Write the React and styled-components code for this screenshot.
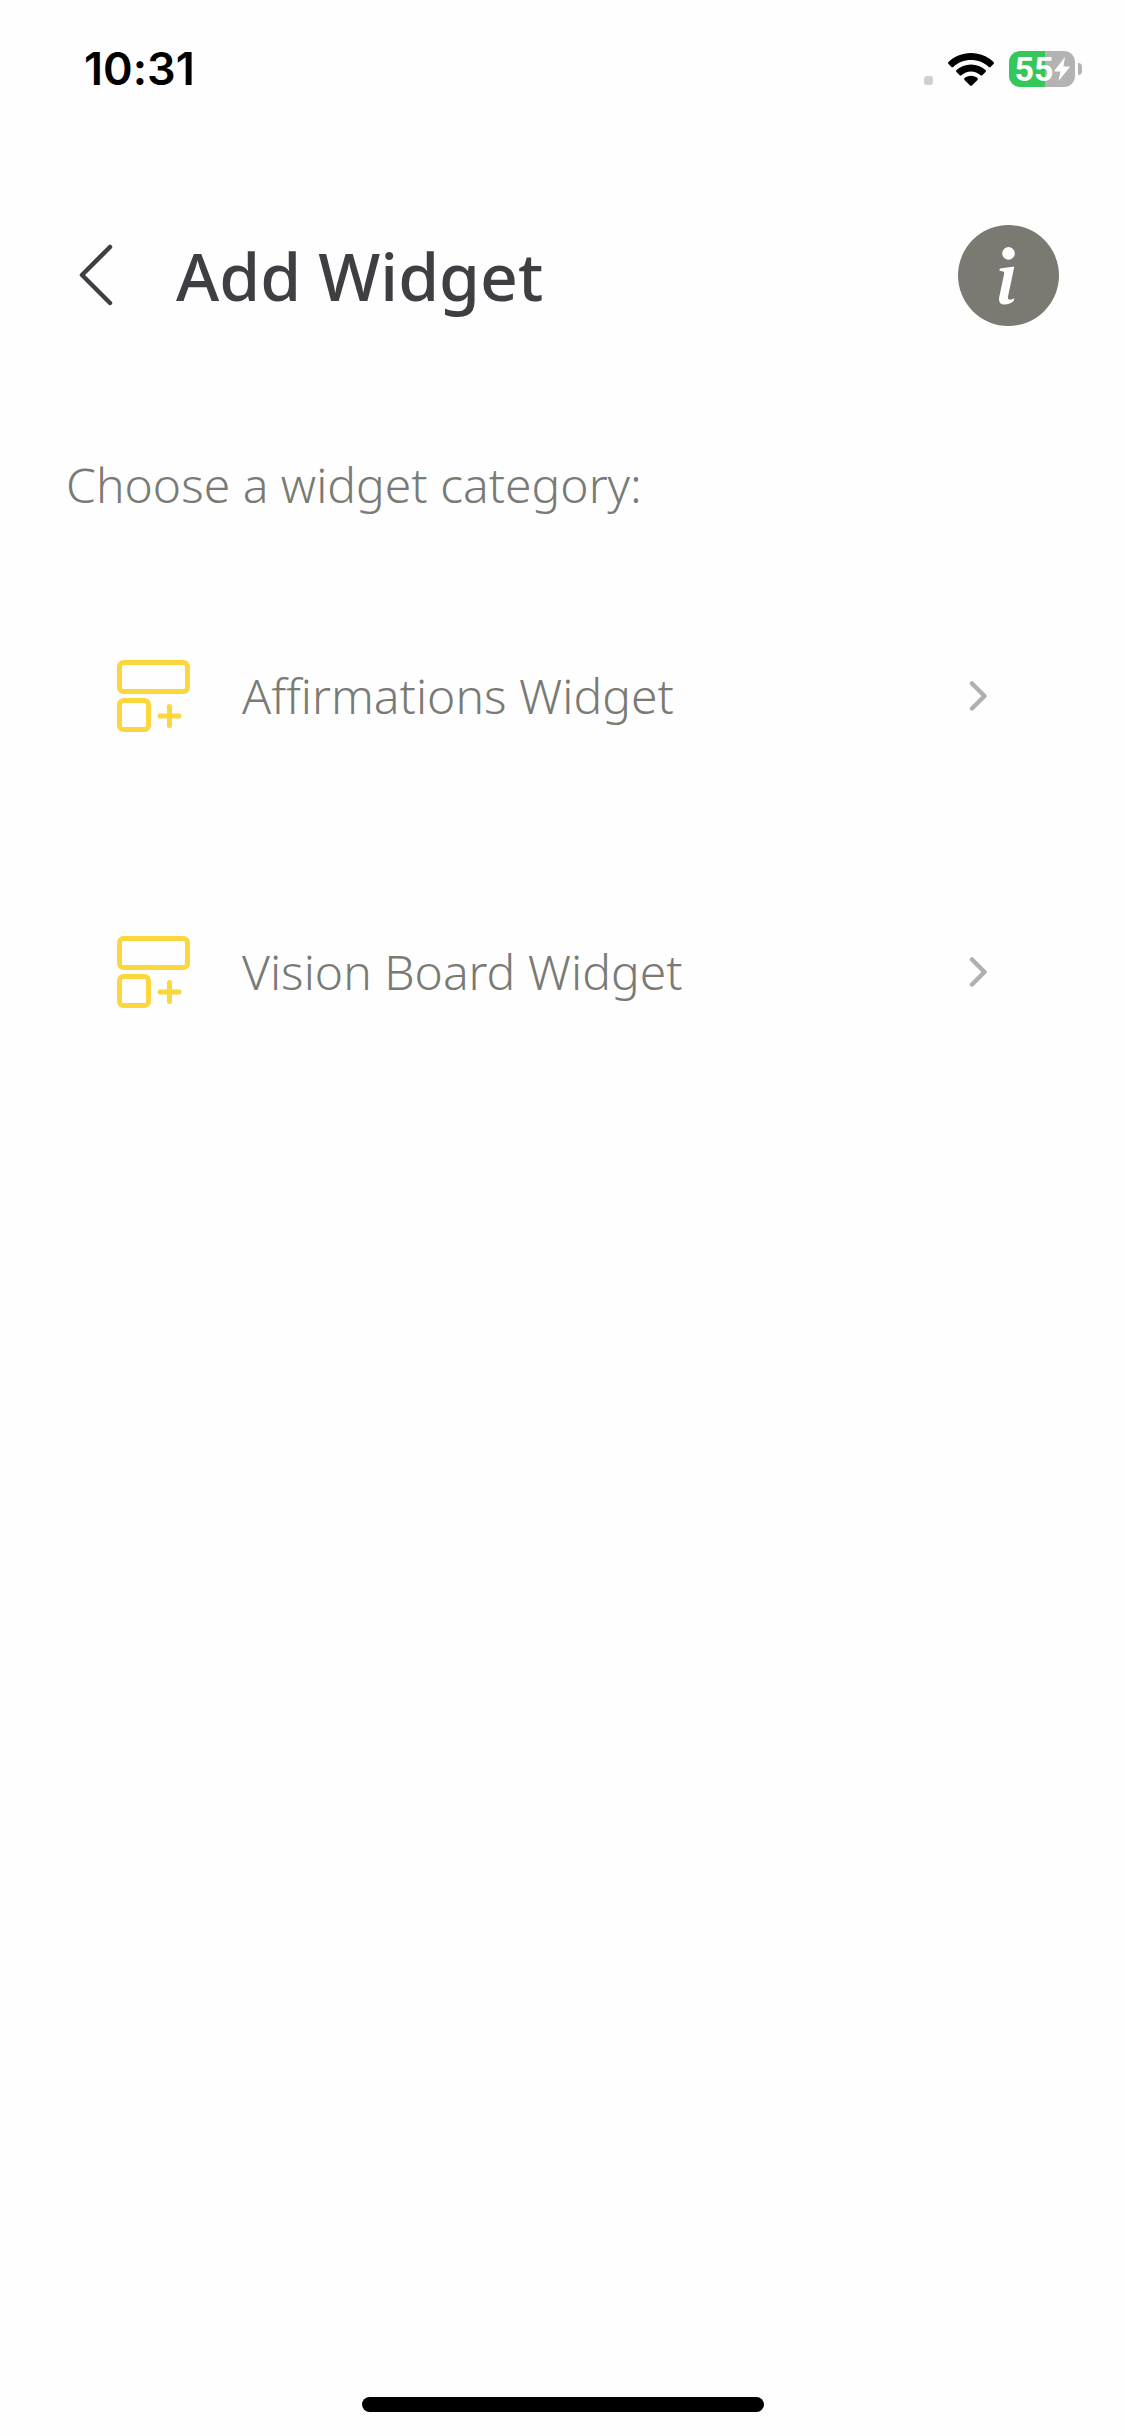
import React from "react";
import styled, { createGlobalStyle } from "styled-components";
import { BsInfoCircleFill } from "react-icons/bs";

const GlobalStyle = createGlobalStyle`
  * {
    box-sizing: border-box;
  }
  body {
    margin: 0;
    background: #fefefe;
    font-family: "Noto Sans", "Open Sans", sans-serif;
    font-variant-ligatures: none;
  }
`;

const Screen = styled.div`
  min-height: 100vh;
  display: flex;
  flex-direction: column;
`;
const StatusBar = styled.div`
  display: flex;
  align-items: center;
  justify-content: space-between;
  height: 138px;
  padding: 0 43px 0 84px;
`;
const Time = styled.time`
  font-family: Inter, sans-serif;
  font-size: 45px;
  font-weight: 600;
  line-height: 54px;
  color: #000000;
`;
const StatusIcons = styled.div`
  display: flex;
  align-items: center;
`;
const SignalDot = styled.span`
  width: 9px;
  height: 9px;
  align-self: flex-end;
  margin: 0 15px 2px 0;
  border-radius: 3px;
  background: #cfcfcf;
`;
const Wifi = styled.svg`
  width: 46px;
  height: 33px;
  margin-right: 15px;
`;
const Battery = styled.div`
  display: flex;
  align-items: center;
  justify-content: center;
  width: 66px;
  height: 36px;
  border-radius: 11px;
  background: linear-gradient(
    to right,
    #34c759 ${({ level }) => level}%,
    #b3b3b3 ${({ level }) => level}%
  );
  font-family: Roboto, sans-serif;
  font-size: 34px;
  font-weight: 700;
  line-height: 36px;
  color: #ffffff;
`;
const BatteryTip = styled.span`
  width: 4px;
  height: 12px;
  margin-left: 3px;
  border-radius: 0 4px 4px 0;
  background: #b3b3b3;
`;

const Header = styled.header`
  display: flex;
  align-items: center;
  height: 274px;
  padding: 0 66px;
`;
const IconButton = styled.button`
  display: flex;
  padding: 0;
  border: none;
  background: none;
  color: ${({ color }) => color};
  cursor: pointer;
`;
const Title = styled.h1`
  flex: 1;
  margin: 0 0 0 50px;
  font-size: 66px;
  font-weight: 500;
  line-height: 90px;
  color: #3f3e42;
`;

const Main = styled.main`
  flex: 1;
  padding: 0 66px;
`;
const Prompt = styled.p`
  margin: 40px 0 82px;
  font-size: 48px;
  font-weight: 350;
  line-height: 66px;
  color: #7a7a75;
`;
const CategoryList = styled.ul`
  display: flex;
  flex-direction: column;
  gap: 84px;
  margin: 0;
  padding: 0;
  list-style: none;
`;
const CategoryButton = styled.button`
  display: flex;
  align-items: center;
  width: 100%;
  height: 192px;
  padding: 0 70px 0 50px;
  border: none;
  background: none;
  font-family: inherit;
  font-size: 48px;
  font-weight: 350;
  font-variant-ligatures: inherit;
  line-height: 66px;
  text-align: left;
  color: #7a7a75;
  cursor: pointer;
`;
const CategoryName = styled.span`
  flex: 1;
  margin-left: 50px;
`;

const HomeIndicator = styled.div`
  width: 402px;
  height: 15px;
  margin: 0 auto 24px;
  border-radius: 8px;
  background: #000000;
`;

const WidgetIcon = () => (
  <svg
    width="76"
    height="74"
    viewBox="0 0 76 74"
    fill="none"
    stroke="#fbd63c"
    strokeWidth="5"
    strokeLinecap="round"
  >
    <rect x="3.5" y="3.5" width="68" height="29" rx="4" />
    <rect x="3.5" y="41.5" width="29" height="29" rx="4" />
    <path d="M44 57h19M53.500 47.500v19" />
  </svg>
);

const ChevronRight = () => (
  <svg
    width="20"
    height="34"
    viewBox="0 0 20 34"
    fill="none"
    stroke="#b0b0b0"
    strokeWidth="4.500"
    strokeLinecap="round"
    strokeLinejoin="round"
  >
    <path d="M3 4.500 15.500 17 3 29.500" />
  </svg>
);

const categories = ["Affirmations Widget", "Vision Board Widget"];

const App = () => {
  return (
    <Screen>
      <GlobalStyle />
      <StatusBar>
        <Time>10:31</Time>
        <StatusIcons>
          <SignalDot />
          <Wifi viewBox="0 0 46 33">
            <path d="M23 0C32 0 40 3.500 45.500 9c.6.6.6 1.300 0 1.900l-3 3c-.5.5-1.200.5-1.800 0C36 9.500 30 7 23 7S10 9.500 5.300 13.900c-.6.5-1.300.5-1.800 0l-3-3c-.6-.6-.6-1.300 0-1.900C6 3.500 14 0 23 0z" />
            <path d="M23 11.500c5.600 0 10.700 2.100 14.500 5.600.6.600.6 1.300 0 1.900l-3.200 3.200c-.5.5-1.200.5-1.800 0-2.600-2.300-5.900-3.700-9.500-3.700s-6.900 1.400-9.500 3.700c-.6.5-1.300.5-1.800 0L8.500 19c-.6-.6-.6-1.300 0-1.900 3.800-3.500 8.900-5.600 14.500-5.600z" />
            <path d="M23 22.800c2.500 0 4.700.9 6.400 2.300.6.500.6 1.200.1 1.800l-5.600 5.600c-.5.5-1.300.5-1.800 0l-5.600-5.600c-.5-.6-.5-1.300.1-1.800 1.700-1.400 3.900-2.300 6.400-2.300z" />
          </Wifi>
          <Battery level={55}>
            55
            <svg width="16" height="26" viewBox="0 0 16 26" fill="#ffffff">
              <path d="M11 1 .5 14.500c-.4.600 0 1 .5 1h5.500L4.500 25 15.500 11.500c.4-.6 0-1-.5-1H9.500z" />
            </svg>
          </Battery>
          <BatteryTip />
        </StatusIcons>
      </StatusBar>
      <Header>
        <IconButton color="#3f3e42" aria-label="Back">
          <svg
            width="60"
            height="66"
            viewBox="0 0 60 66"
            fill="none"
            stroke="currentColor"
            strokeWidth="4.500"
            strokeLinecap="round"
            strokeLinejoin="round"
          >
            <path d="M44 5 16 33l28 28" />
          </svg>
        </IconButton>
        <Title>Add Widget</Title>
        <IconButton color="#7a7a73" aria-label="Info">
          <BsInfoCircleFill size={101} />
        </IconButton>
      </Header>
      <Main>
        <Prompt>Choose a widget category:</Prompt>
        <CategoryList>
          {categories.map((name) => (
            <li key={name}>
              <CategoryButton>
                <WidgetIcon />
                <CategoryName>{name}</CategoryName>
                <ChevronRight />
              </CategoryButton>
            </li>
          ))}
        </CategoryList>
      </Main>
      <HomeIndicator />
    </Screen>
  );
};

export default App;
